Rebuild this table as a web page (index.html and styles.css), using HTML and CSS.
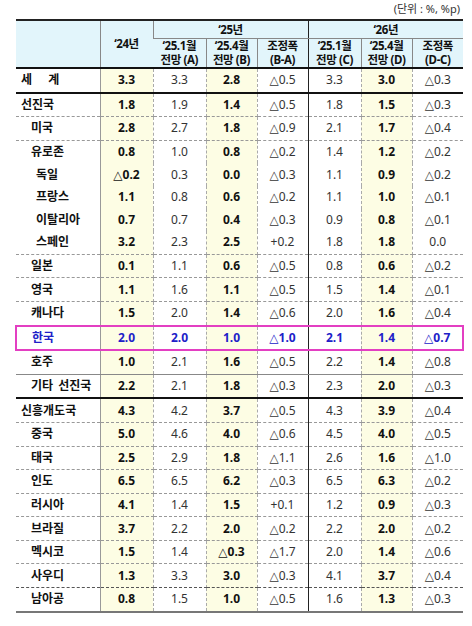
FILE: index.html
```html
<!DOCTYPE html>
<html lang="ko">
<head>
    <meta charset="UTF-8">
    <meta name="viewport" content="width=device-width, initial-scale=1.0">
    <title>세계 경제성장률 전망</title>
    <link rel="stylesheet" href="styles.css">
</head>
<body>
    <div class="page">
        <div class="unit">(단위 : %, %p)</div>

        <table class="outlook">
            <colgroup>
                <col class="c-name">
                <col class="c-num">
                <col class="c-num">
                <col class="c-num2">
                <col class="c-num2">
                <col class="c-num">
                <col class="c-num2">
                <col class="c-num2">
            </colgroup>
            <thead>
                <tr class="h1">
                    <th rowspan="2" class="v-name"></th>
                    <th rowspan="2" class="v-solid">‘24년</th>
                    <th colspan="3" class="v-dark">‘25년</th>
                    <th colspan="3">‘26년</th>
                </tr>
                <tr class="h2">
                    <th>‘25.1월<br>전망 (A)</th>
                    <th>‘25.4월<br>전망 (B)</th>
                    <th class="v-dark">조정폭<br>(B-A)</th>
                    <th>‘25.1월<br>전망 (C)</th>
                    <th>‘25.4월<br>전망 (D)</th>
                    <th>조정폭<br>(D-C)</th>
                </tr>
            </thead>
            <tbody>
                <tr class="thick">
                    <td class="name lv0"><span class="wide">세 계</span></td>
                    <td class="b y">3.3</td><td>3.3</td><td class="b y">2.8</td><td class="gap">△0.5</td>
                    <td>3.3</td><td class="b y">3.0</td><td>△0.3</td>
                </tr>
                <tr class="dash">
                    <td class="name lv0">선진국</td>
                    <td class="b y">1.8</td><td>1.9</td><td class="b y">1.4</td><td class="gap">△0.5</td>
                    <td>1.8</td><td class="b y">1.5</td><td>△0.3</td>
                </tr>
                <tr class="dash">
                    <td class="name lv1">미국</td>
                    <td class="b y">2.8</td><td>2.7</td><td class="b y">1.8</td><td class="gap">△0.9</td>
                    <td>2.1</td><td class="b y">1.7</td><td>△0.4</td>
                </tr>
                <tr>
                    <td class="name lv1">유로존</td>
                    <td class="b y">0.8</td><td>1.0</td><td class="b y">0.8</td><td class="gap">△0.2</td>
                    <td>1.4</td><td class="b y">1.2</td><td>△0.2</td>
                </tr>
                <tr>
                    <td class="name lv2">독일</td>
                    <td class="b y">△0.2</td><td>0.3</td><td class="b y">0.0</td><td class="gap">△0.3</td>
                    <td>1.1</td><td class="b y">0.9</td><td>△0.2</td>
                </tr>
                <tr>
                    <td class="name lv2">프랑스</td>
                    <td class="b y">1.1</td><td>0.8</td><td class="b y">0.6</td><td class="gap">△0.2</td>
                    <td>1.1</td><td class="b y">1.0</td><td>△0.1</td>
                </tr>
                <tr>
                    <td class="name lv2">이탈리아</td>
                    <td class="b y">0.7</td><td>0.7</td><td class="b y">0.4</td><td class="gap">△0.3</td>
                    <td>0.9</td><td class="b y">0.8</td><td>△0.1</td>
                </tr>
                <tr class="dash">
                    <td class="name lv2">스페인</td>
                    <td class="b y">3.2</td><td>2.3</td><td class="b y">2.5</td><td class="gap">+0.2</td>
                    <td>1.8</td><td class="b y">1.8</td><td>0.0</td>
                </tr>
                <tr class="dash">
                    <td class="name lv1">일본</td>
                    <td class="b y">0.1</td><td>1.1</td><td class="b y">0.6</td><td class="gap">△0.5</td>
                    <td>0.8</td><td class="b y">0.6</td><td>△0.2</td>
                </tr>
                <tr class="dash">
                    <td class="name lv1">영국</td>
                    <td class="b y">1.1</td><td>1.6</td><td class="b y">1.1</td><td class="gap">△0.5</td>
                    <td>1.5</td><td class="b y">1.4</td><td>△0.1</td>
                </tr>
                <tr>
                    <td class="name lv1">캐나다</td>
                    <td class="b y">1.5</td><td>2.0</td><td class="b y">1.4</td><td class="gap">△0.6</td>
                    <td>2.0</td><td class="b y">1.6</td><td>△0.4</td>
                </tr>
                <tr class="korea">
                    <td class="name lv1">한국</td>
                    <td class="b y">2.0</td><td class="b">2.0</td><td class="b y">1.0</td><td class="b gap">△1.0</td>
                    <td class="b">2.1</td><td class="b y">1.4</td><td class="b">△0.7</td>
                </tr>
                <tr class="solid">
                    <td class="name lv1">호주</td>
                    <td class="b y">1.0</td><td>2.1</td><td class="b y">1.6</td><td class="gap">△0.5</td>
                    <td>2.2</td><td class="b y">1.4</td><td>△0.8</td>
                </tr>
                <tr class="thick">
                    <td class="name lv1"><span class="etc">기타 선진국</span></td>
                    <td class="b y">2.2</td><td>2.1</td><td class="b y">1.8</td><td class="gap">△0.3</td>
                    <td>2.3</td><td class="b y">2.0</td><td>△0.3</td>
                </tr>
                <tr class="dash">
                    <td class="name lv0">신흥개도국</td>
                    <td class="b y">4.3</td><td>4.2</td><td class="b y">3.7</td><td class="gap">△0.5</td>
                    <td>4.3</td><td class="b y">3.9</td><td>△0.4</td>
                </tr>
                <tr class="dash">
                    <td class="name lv1">중국</td>
                    <td class="b y">5.0</td><td>4.6</td><td class="b y">4.0</td><td class="gap">△0.6</td>
                    <td>4.5</td><td class="b y">4.0</td><td>△0.5</td>
                </tr>
                <tr class="dash">
                    <td class="name lv1">태국</td>
                    <td class="b y">2.5</td><td>2.9</td><td class="b y">1.8</td><td class="gap">△1.1</td>
                    <td>2.6</td><td class="b y">1.6</td><td>△1.0</td>
                </tr>
                <tr class="dash">
                    <td class="name lv1">인도</td>
                    <td class="b y">6.5</td><td>6.5</td><td class="b y">6.2</td><td class="gap">△0.3</td>
                    <td>6.5</td><td class="b y">6.3</td><td>△0.2</td>
                </tr>
                <tr class="dash">
                    <td class="name lv1">러시아</td>
                    <td class="b y">4.1</td><td>1.4</td><td class="b y">1.5</td><td class="gap">+0.1</td>
                    <td>1.2</td><td class="b y">0.9</td><td>△0.3</td>
                </tr>
                <tr class="dash">
                    <td class="name lv1">브라질</td>
                    <td class="b y">3.7</td><td>2.2</td><td class="b y">2.0</td><td class="gap">△0.2</td>
                    <td>2.2</td><td class="b y">2.0</td><td>△0.2</td>
                </tr>
                <tr class="dash">
                    <td class="name lv1">멕시코</td>
                    <td class="b y">1.5</td><td>1.4</td><td class="b y">△0.3</td><td class="gap">△1.7</td>
                    <td>2.0</td><td class="b y">1.4</td><td>△0.6</td>
                </tr>
                <tr class="dash dark">
                    <td class="name lv1">사우디</td>
                    <td class="b y">1.3</td><td>3.3</td><td class="b y">3.0</td><td class="gap">△0.3</td>
                    <td>4.1</td><td class="b y">3.7</td><td>△0.4</td>
                </tr>
                <tr class="last">
                    <td class="name lv1">남아공</td>
                    <td class="b y">0.8</td><td>1.5</td><td class="b y">1.0</td><td class="gap">△0.5</td>
                    <td>1.6</td><td class="b y">1.3</td><td>△0.3</td>
                </tr>
            </tbody>
        </table>
    </div>
</body>
</html>
```

FILE: styles.css
```css
body {
    margin: 0;
    background: #fff;
    color: #111;
    font-family: "Noto Sans", "DejaVu Sans", "Noto Sans CJK KR", sans-serif;
}
.page {
    padding: 2px 12px 0 15px;
}
.unit {
    height: 17px;
    line-height: 14px;
    font-size: 11px;
    color: #333;
    text-align: right;
}
.outlook {
    width: 445px;
    table-layout: fixed;
    border-collapse: collapse;
    font-size: 12px;
}
.c-name { width: 84px; }
.c-num { width: 53px; }
.c-num2 { width: 51px; }

/* header */
.outlook th {
    background: #e2f5fb;
    font-weight: bold;
    font-size: 11.5px;
    letter-spacing: -0.4px;
    line-height: 14px;
    padding: 0;
    border-left: 1px solid #888;
    border-bottom: 1px solid #888;
}
.outlook th:first-child {
    border-left: none;
}
.outlook .h1 th {
    height: 17px;
    border-top: 2px solid #222;
}
.outlook .h2 th {
    height: 28px;
    border-bottom: 2px solid #111;
}
.outlook th[rowspan] {
    border-bottom: 2px solid #111;
}
.outlook th.v-dark {
    border-right: 1px solid #222;
}

/* body */
.outlook td {
    height: 22.6px;
    padding: 0;
    line-height: 16px;
    text-align: center;
    color: #333;
    border-right: 1px dashed #aaa;
}
.outlook td:last-child {
    border-right: none;
}
.outlook td.name {
    text-align: left;
    font-weight: bold;
    color: #111;
    border-right: 1px solid #999;
}
.outlook td.gap {
    border-right: 1px solid #222;
}
.outlook td.b {
    font-weight: bold;
    color: #111;
}
.outlook td.y {
    background: #fdfde4;
}
.lv0 { padding-left: 5px !important; }
.lv1 { padding-left: 15px !important; }
.lv2 { padding-left: 20px !important; }
.wide { word-spacing: 13px; }
.etc { word-spacing: 2px; }

/* row separators */
.outlook tr.dash td { border-bottom: 1px dashed #999; }
.outlook tr.dash.dark td { border-bottom-color: #555; }
.outlook tr.solid td { border-bottom: 1px solid #888; }
.outlook tr.thick td { border-bottom: 2px solid #111; }
.outlook tr.last td { border-bottom: 2px solid #777; }

/* highlighted row */
.outlook tr.korea td {
    color: #2020c8;
    border-top: 2px solid #e33fc2;
    border-bottom: 2px solid #e33fc2;
}
.outlook tr.korea td:first-child { border-left: 2px solid #e33fc2; }
.outlook tr.korea td:last-child { border-right: 2px solid #e33fc2; }
```
